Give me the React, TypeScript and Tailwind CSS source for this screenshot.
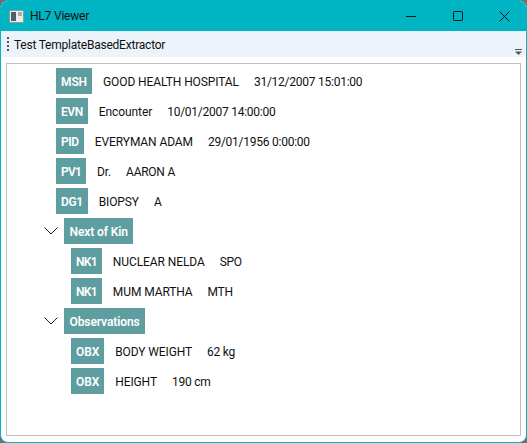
const segments = [
  { tag: "MSH", indent: "ml-[49px]", tagClass: "tracking-[-0.1px]", texts: ["GOOD HEALTH HOSPITAL", "31/12/2007 15:01:00"] },
  { tag: "EVN", indent: "ml-[49px]", tagClass: "tracking-[-0.4px]", texts: ["Encounter", "10/01/2007 14:00:00"] },
  { tag: "PID", indent: "ml-[49px]", tagClass: "tracking-[-0.4px]", texts: ["EVERYMAN ADAM", "29/01/1956 0:00:00"] },
  { tag: "PV1", indent: "ml-[49px]", tagClass: "tracking-[-0.8px]", texts: ["Dr.", "AARON A"] },
  { tag: "DG1", indent: "ml-[49px]", tagClass: "tracking-[-0.4px]", texts: ["BIOPSY", "A"] },
  { group: "Next of Kin" },
  { tag: "NK1", indent: "ml-[64px]", tagClass: "tracking-[-0.7px]", texts: ["NUCLEAR NELDA", "SPO"] },
  { tag: "NK1", indent: "ml-[64px]", tagClass: "tracking-[-0.7px]", texts: ["MUM MARTHA", "MTH"] },
  { group: "Observations" },
  { tag: "OBX", indent: "ml-[64px]", tagClass: "tracking-[-0.1px]", texts: ["BODY WEIGHT", "62 kg"] },
  { tag: "OBX", indent: "ml-[64px]", tagClass: "tracking-[-0.1px]", texts: ["HEIGHT", "190 cm"] },
];

function Tag({ label, className }: { label: string; className: string }) {
  return (
    <span className={`h-[26px] px-[5px] pt-[2px] flex items-center bg-[#5f9ea0] text-white font-semibold text-[12px] ${className}`}>
      {label}
    </span>
  );
}

export default function App() {
  return (
    <div className="w-[527px] h-[443px] bg-[#6f6f6f] overflow-hidden font-['Roboto','Noto_Sans',sans-serif] text-[12px] text-[#111]">
      <div className="h-full flex flex-col bg-white border border-[#00b4c3] rounded-[8px] overflow-hidden">
        {/* Title bar */}
        <div className="h-[30px] shrink-0 bg-[#00b4c3] flex items-center">
          <svg className="ml-[8px]" width="15" height="13" viewBox="0 0 15 13">
            <rect x="0.5" y="0.5" width="14" height="12" fill="#e8eeee" stroke="#8a9a9a" />
            <rect x="2" y="2" width="5" height="9" fill="#4c5f63" />
            <rect x="9" y="2" width="4" height="4" fill="#9fb0b3" />
          </svg>
          <span className="ml-[6px] text-[12px] tracking-[-0.2px]">HL7 Viewer</span>
          <div className="ml-auto flex items-center">
            <svg className="mr-[37px]" width="10" height="10" viewBox="0 0 10 10">
              <path d="M0 5.5h10" stroke="#111" strokeWidth="1" />
            </svg>
            <svg className="mr-[36px]" width="10" height="10" viewBox="0 0 10 10">
              <rect x="0.5" y="0.5" width="9" height="9" rx="1" fill="none" stroke="#111" />
            </svg>
            <svg className="mr-[16px]" width="11" height="11" viewBox="0 0 11 11">
              <path d="M0.5 0.5l10 10M10.5 0.5l-10 10" stroke="#111" strokeWidth="1" />
            </svg>
          </div>
        </div>

        {/* Toolbar */}
        <div className="h-[26px] shrink-0 mr-[1px] bg-[#edf3fb] rounded-[3px] flex items-center relative">
          <div className="ml-[6px] flex flex-col gap-[2px]">
            <span className="w-[2px] h-[2px] bg-[#555]" />
            <span className="w-[2px] h-[2px] bg-[#555]" />
            <span className="w-[2px] h-[2px] bg-[#555]" />
            <span className="w-[2px] h-[2px] bg-[#555]" />
          </div>
          <span className="ml-[5px] pt-[2px] tracking-[-0.22px]">Test TemplateBasedExtractor</span>
          <svg className="absolute right-[3px] bottom-[2px]" width="7" height="6" viewBox="0 0 7 6">
            <path d="M0 0.5h7" stroke="#555" />
            <path d="M0 2.5h7L3.5 6z" fill="#555" />
          </svg>
        </div>

        {/* Tree */}
        <div className="flex-1 mt-[6px] ml-[5px] mr-[5px] mb-[6px] border border-[#bfbfbf] pt-[4px] flex flex-col gap-[4px]">
          {segments.map((row, i) =>
            row.group ? (
              <div key={i} className="flex items-center h-[26px]">
                <svg className="ml-[37px] mr-[6px]" width="14" height="8" viewBox="0 0 14 8">
                  <path d="M0.5 0.5L7 7L13.5 0.5" fill="none" stroke="#222" strokeWidth="1" />
                </svg>
                <Tag label={row.group} className="!px-[5.5px] tracking-[-0.1px]" />
              </div>
            ) : (
              <div key={i} className={`flex items-center h-[26px] ${row.indent}`}>
                <Tag label={row.tag as string} className={row.tagClass as string} />
                <span className="ml-[11px] pt-[2px] tracking-[-0.1px]">{row.texts?.[0]}</span>
                <span className="ml-[15px] pt-[2px] tracking-[-0.25px]">{row.texts?.[1]}</span>
              </div>
            )
          )}
        </div>
      </div>
    </div>
  );
}
